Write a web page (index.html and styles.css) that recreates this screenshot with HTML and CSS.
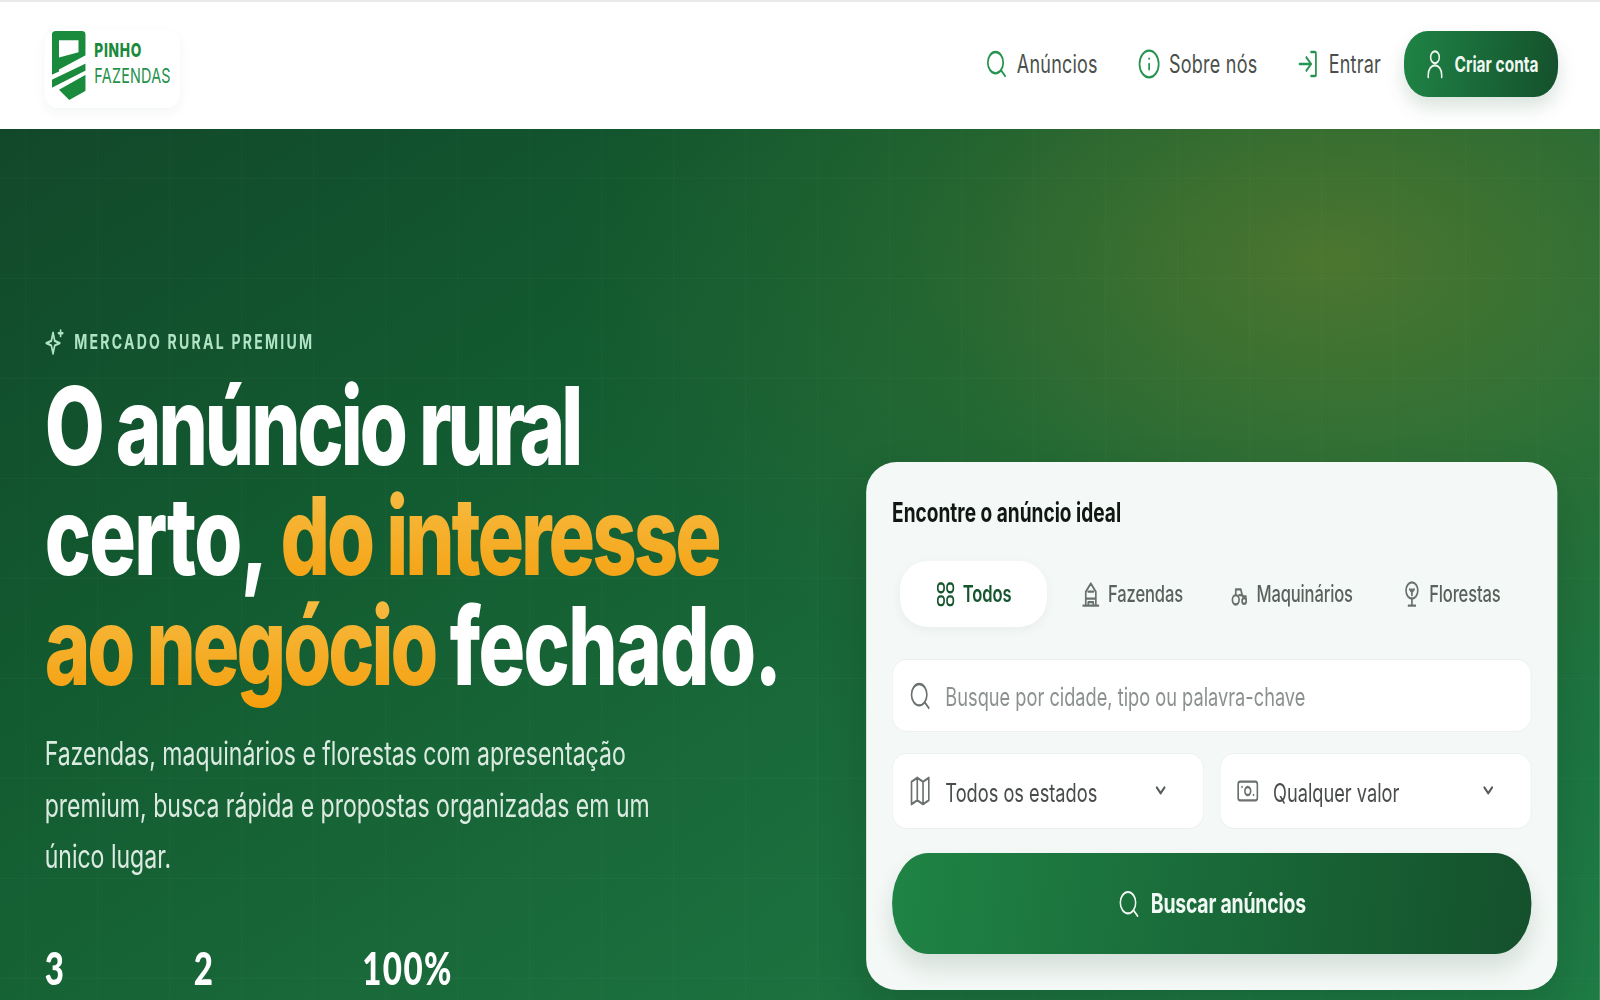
FILE: index.html
```html
<!DOCTYPE html>
<html lang="pt-BR">
<head>
<meta charset="utf-8">
<title>Pinho Fazendas</title>
<link rel="stylesheet" href="styles.css">
</head>
<body>
<div class="page">
<header class="topbar">
  <a class="logo">
    <svg class="logo-mark" viewBox="0 0 33 68" preserveAspectRatio="none">
      <path fill="#1a8a3c" fill-rule="evenodd" d="M4 0H29Q33 0 33 4V24L7 38V40L0 43V4Q0 0 4 0ZM7 9V26L26 21V9Z"/>
      <path fill="#1a8a3c" d="M33 32V39L0 56V48Z"/>
      <path fill="#1a8a3c" d="M33 43V59L17 68L7 58Z"/>
    </svg>
    <span class="logo-text"><b>PINHO</b><span>FAZENDAS</span></span>
  </a>
  <nav class="nav">
    <a class="nav-link">
      <svg class="nav-icon" viewBox="0 0 24 24"><circle cx="11" cy="11" r="8"/><path d="M21 21l-4.300-4.300"/></svg>
      Anúncios
    </a>
    <a class="nav-link">
      <svg class="nav-icon" viewBox="0 0 24 24"><circle cx="12" cy="12" r="10"/><path d="M12 16v-4M12 8h.01"/></svg>
      Sobre nós
    </a>
    <a class="nav-link">
      <svg class="nav-icon" viewBox="0 0 24 24"><path d="M15 3h4a1 1 0 0 1 1 1v16a1 1 0 0 1-1 1h-4M10 17l5-5-5-5M15 12H3"/></svg>
      Entrar
    </a>
    <a class="nav-cta">
      <svg class="cta-icon" viewBox="0 0 24 24"><circle cx="12" cy="7" r="4.500"/><path d="M5 22v-2a7 7 0 0 1 14 0v2"/></svg>
      Criar conta
    </a>
  </nav>
</header>

<main class="hero">
  <section class="hero-copy">
    <div class="eyebrow">
      <svg class="eyebrow-icon" viewBox="0 0 24 24"><path d="M10 4l2 7 6 2-6 2-2 7-2-7-6-2 6-2z"/><path d="M19 2v5M16.500 4.500h5"/></svg>
      MERCADO RURAL PREMIUM
    </div>
    <h1 class="headline">O anúncio <span class="narrow">rural</span><br><span class="wide">certo,</span> <em>do interesse<br>ao negócio</em> <span class="wide">fechado.</span></h1>
    <p class="lead">Fazendas, maquinários e florestas com apresentação premium, busca rápida e propostas organizadas em um único lugar.</p>
    <div class="stats">
      <strong class="stat stat-a">3</strong>
      <strong class="stat stat-b">2</strong>
      <strong class="stat">100%</strong>
    </div>
  </section>

  <section class="search-card">
    <h2 class="card-title">Encontre o anúncio ideal</h2>
    <div class="tabs">
      <a class="tab tab-active">
        <svg class="tab-icon" viewBox="0 0 24 24"><rect x="3" y="3" width="7.500" height="7.500" rx="3"/><rect x="14" y="3" width="7.500" height="7.500" rx="3"/><rect x="3" y="14" width="7.500" height="7.500" rx="3"/><rect x="14" y="14" width="7.500" height="7.500" rx="3"/></svg>
        Todos
      </a>
      <a class="tab">
        <svg class="tab-icon" viewBox="0 0 24 24"><path d="M3 22h18M6 22V10l6-7 6 7v12M6 16h12M9 10h6M9 22v-3h6v3"/></svg>
        Fazendas
      </a>
      <a class="tab">
        <svg class="tab-icon" viewBox="0 0 24 24"><circle cx="8" cy="17" r="4"/><circle cx="18" cy="18" r="2.500"/><path d="M8 13V8h6l2 6h4v2M12 13h4"/></svg>
        Maquinários
      </a>
      <a class="tab">
        <svg class="tab-icon" viewBox="0 0 24 24"><circle cx="12" cy="9" r="7"/><path d="M12 16v6M8 22h8M12 13V8M9.500 8l2.500 2.500L14.500 8"/></svg>
        Florestas
      </a>
    </div>
    <div class="field">
      <svg class="field-icon" viewBox="0 0 24 24"><circle cx="11" cy="11" r="8"/><path d="M21 21l-4.300-4.300"/></svg>
      <span class="placeholder">Busque por cidade, tipo ou palavra-chave</span>
    </div>
    <div class="selects">
      <div class="select">
        <svg class="field-icon" viewBox="0 0 24 24"><path d="M3 5l6-3 6 3 6-3v17l-6 3-6-3-6 3zM9 2v17M15 5v17"/></svg>
        <span class="select-label">Todos os estados</span>
        <svg class="chevron" viewBox="0 0 12 12" preserveAspectRatio="none"><path d="M2 3l4 5 4-5"/></svg>
      </div>
      <div class="select">
        <svg class="field-icon" viewBox="0 0 24 24"><rect x="2" y="5" width="20" height="14" rx="2"/><circle cx="12" cy="12" r="3"/><path d="M6 9h.01M18 15h.01"/></svg>
        <span class="select-label">Qualquer valor</span>
        <svg class="chevron" viewBox="0 0 12 12" preserveAspectRatio="none"><path d="M2 3l4 5 4-5"/></svg>
      </div>
    </div>
    <a class="search-btn">
      <svg class="cta-icon" viewBox="0 0 24 24"><circle cx="11" cy="11" r="8"/><path d="M21 21l-4.300-4.300"/></svg>
      Buscar anúncios
    </a>
  </section>
</main>
</div>
</body>
</html>
```

FILE: styles.css
```css
* { box-sizing: border-box; }
html, body { margin: 0; height: 1000px; overflow: hidden; }
body { font-family: Inter, "Liberation Sans", sans-serif; background: #fff; color: #111; }
a { color: inherit; text-decoration: none; }

/* The reference is a narrowed capture: the whole page is laid out wider and squeezed horizontally. */
.page {
  width: 2222px;
  transform: scaleX(.72);
  transform-origin: 0 0;
  filter: blur(.35px);
}

.topbar {
  height: 129px;
  border-top: 2px solid #e9e9e9;
  padding: 0 58px 0 62px;
  display: flex;
  align-items: center;
  justify-content: space-between;
  background: #fff;
}
.logo {
  width: 188px;
  height: 78px;
  margin-top: 6px;
  padding: 0 0 0 10px;
  display: flex;
  align-items: center;
  gap: 11px;
  border-radius: 16px;
  box-shadow: 0 4px 14px rgba(20, 60, 35, .05);
}
.logo-mark { flex: none; width: 47px; height: 69px; margin-top: -6px; }
.logo-text { display: flex; flex-direction: column; gap: 1px; margin: -11px 0 0 1px; color: #24914a; font-size: 20px; line-height: 24px; letter-spacing: .3px; }
.logo-text b { font-size: 19px; font-weight: 800; letter-spacing: 1px; color: #1a8a3c; }

.nav { display: flex; align-items: center; margin-top: -4px; }
.nav-link {
  display: flex;
  align-items: center;
  gap: 12px;
  margin-right: 55px;
  font-size: 25px;
  font-weight: 400;
  letter-spacing: .3px;
  color: #4a4f4c;
}
.nav-link:nth-child(3) { margin-right: 32px; }
.nav-icon { width: 32px; height: 32px; fill: none; stroke: #26934f; stroke-width: 1.800; stroke-linecap: round; stroke-linejoin: round; }
.nav-cta {
  width: 214px;
  height: 66px;
  border-radius: 33px / 30px;
  display: flex;
  align-items: center;
  justify-content: center;
  gap: 11px;
  font-size: 21.500px;
  font-weight: 700;
  color: #eef8f1;
  background: linear-gradient(100deg, #1f8445, #14502c);
  box-shadow: 0 10px 22px rgba(20, 80, 44, .16);
}
.cta-icon { width: 32px; height: 32px; fill: none; stroke: #eef8f1; stroke-width: 1.600; stroke-linecap: round; stroke-linejoin: round; }

.hero {
  height: 871px;
  padding: 0 59px 0 62px;
  display: flex;
  justify-content: space-between;
  background:
    linear-gradient(rgba(255,255,255,.022) 1px, transparent 1px) 0 49px / 100% 100px,
    linear-gradient(90deg, rgba(255,255,255,.022) 1px, transparent 1px) 35px 0 / 100px 100%,
    radial-gradient(ellipse 1060px 480px at 1847px 132px, rgba(96, 124, 44, .72), rgba(62, 112, 45, .34) 55%, transparent 100%),
    linear-gradient(155deg, #12482a 0%, #125a30 30%, #1b6d3c 65%, #1e7c44 100%);
}
.hero-copy { width: 1100px; padding-top: 199px; }
.eyebrow {
  display: flex;
  align-items: center;
  gap: 13px;
  font-size: 19.500px;
  line-height: 24px;
  font-weight: 700;
  letter-spacing: 3.100px;
  color: #b0e3c5;
}
.eyebrow-icon { width: 28px; height: 28px; fill: none; stroke: #b0e3c5; stroke-width: 2; stroke-linejoin: round; stroke-linecap: round; }
.headline {
  margin: 15px 0 0;
  font-size: 108px;
  line-height: 110px;
  font-weight: 800;
  letter-spacing: -4.200px;
  color: #fff;
}
.headline .narrow { letter-spacing: -5.800px; }
.headline .wide { letter-spacing: -2.300px; }
.headline em {
  font-style: normal;
  color: transparent;
  background: linear-gradient(180deg, #f6c04a, #f59e0b);
  -webkit-background-clip: text;
  background-clip: text;
}
.lead {
  width: 880px;
  margin: 27px 0 0;
  font-size: 32px;
  line-height: 51.500px;
  font-weight: 400;
  color: #dcebe1;
}
.stats { margin-top: 60px; display: flex; font-family: Lato, sans-serif; }
.stat { font-size: 46px; line-height: 50px; font-weight: 900; letter-spacing: 2px; color: #fff; }
.stat-a { width: 207px; }
.stat-b { width: 234px; }

.search-card {
  width: 960px;
  height: 528px;
  margin-top: 333px;
  padding: 32px 36px 0;
  border-radius: 43px / 30px;
  background: #f4f8f6;
  box-shadow: 0 24px 60px rgba(0, 0, 0, .14);
}
.card-title { margin: 0; font-size: 26.500px; line-height: 36px; font-weight: 700; color: #111713; }
.tabs { margin-top: 31px; padding-left: 11px; display: flex; align-items: center; }
.tab {
  flex: none;
  height: 66px;
  display: flex;
  align-items: center;
  justify-content: center;
  gap: 10px;
  font-size: 23px;
  font-weight: 500;
  letter-spacing: -.200px;
  color: #59625d;
}
.tab:nth-child(2) { width: 236px; }
.tab:nth-child(3) { width: 206px; }
.tab:nth-child(4) { width: 239px; }
.tab-active {
  width: 204px;
  border-radius: 38px / 28px;
  background: #fff;
  color: #17552f;
  font-weight: 600;
  box-shadow: 0 3px 12px rgba(20, 60, 35, .05);
}
.tab-icon { width: 28px; height: 28px; fill: none; stroke: #68716c; stroke-width: 2; stroke-linecap: round; stroke-linejoin: round; }
.tab-active .tab-icon { stroke: #17552f; }

.field, .select {
  display: flex;
  align-items: center;
  background: #fff;
  border: 1px solid #ecf0ee;
  border-radius: 20px / 16px;
  padding-left: 22px;
}
.field { margin-top: 32px; height: 73px; gap: 19px; }
.field-icon { flex: none; width: 32px; height: 32px; fill: none; stroke: #6a716d; stroke-width: 1.700; stroke-linecap: round; stroke-linejoin: round; }
.placeholder { margin-top: 2px; font-size: 25.300px; color: #8b918e; }
.selects { margin-top: 21px; display: flex; gap: 22px; }
.select { flex: 1; height: 76px; gap: 19px; padding-right: 51px; }
.select-label { flex: 1; margin-top: 2px; font-size: 25.300px; color: #484d4a; }
.chevron { width: 16px; height: 14px; fill: none; stroke: #555c58; stroke-width: 2; stroke-linecap: round; stroke-linejoin: round; }
.search-btn {
  margin-top: 24px;
  height: 101px;
  border-radius: 50px;
  display: flex;
  align-items: center;
  justify-content: center;
  gap: 14px;
  font-size: 27px;
  font-weight: 700;
  letter-spacing: -.300px;
  color: #f1f9f4;
  background: linear-gradient(100deg, #1f8445, #14502c);
  box-shadow: 0 14px 26px rgba(20, 80, 44, .14);
}
```
